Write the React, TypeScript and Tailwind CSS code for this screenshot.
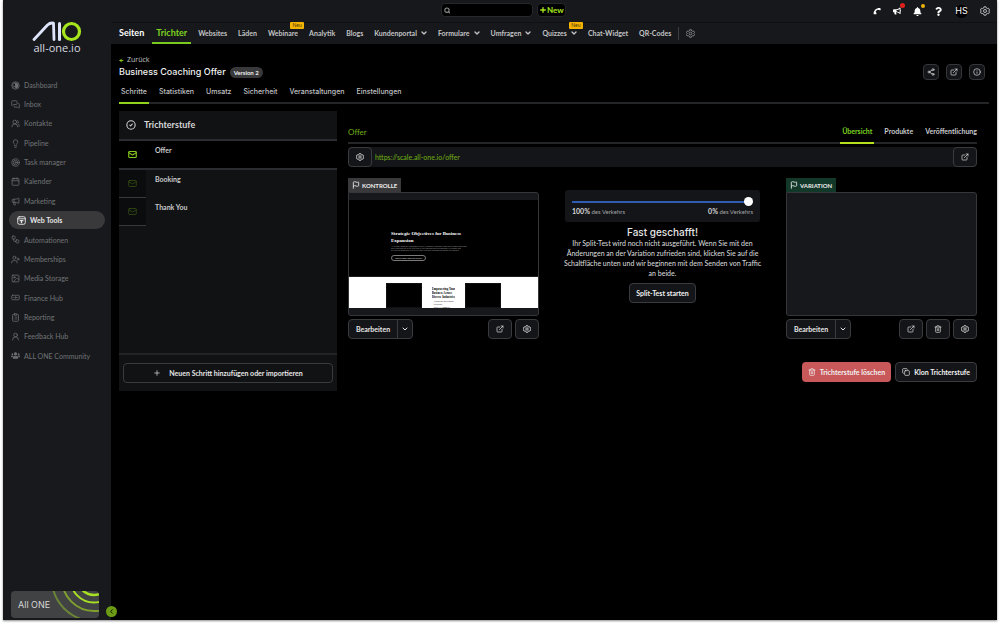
import React from "react";
import {
  ArrowLeft,
  Calendar,
  ChevronDown,
  ChevronLeft,
  CircleCheck,
  ClipboardList,
  Copy,
  ExternalLink,
  Flag,
  Image,
  Info,
  Lightbulb,
  Mail,
  Megaphone,
  MessagesSquare,
  Banknote,
  Plus,
  Search,
  Share2,
  Target,
  Trash2,
  UserPlus,
  UserRound,
  UsersRound,
  Workflow,
} from "lucide-react";
import { FaBell, FaBullhorn, FaQuestion, FaUsers } from "react-icons/fa";

type IconType = React.ComponentType<{ className?: string }>;

function DashboardIcon({ className = "" }: { className?: string }) {
  return (
    <svg viewBox="0 0 24 24" fill="none" stroke="currentColor" strokeWidth="2" className={className} aria-hidden="true">
      <circle cx="12" cy="12" r="10" />
      <path d="M12 5a7 7 0 0 1 0 14z" fill="currentColor" />
      <path d="M12 5a7 7 0 0 0-5 12l5-5z" />
    </svg>
  );
}

function WebToolsIcon({ className = "" }: { className?: string }) {
  return (
    <svg viewBox="0 0 24 24" fill="none" stroke="currentColor" strokeWidth="2.500" strokeLinecap="round" strokeLinejoin="round" className={className} aria-hidden="true">
      <rect x="2" y="2" width="20" height="20" rx="4" />
      <path d="M2 7.500h20" />
      <path d="M8 12h8M12 12v6M9.500 15.500 12 18l2.500-2.500" />
    </svg>
  );
}

const sidebarItems: { label: string; icon: IconType }[] = [
  { label: "Dashboard", icon: DashboardIcon },
  { label: "Inbox", icon: MessagesSquare },
  { label: "Kontakte", icon: UsersRound },
  { label: "Pipeline", icon: Lightbulb },
  { label: "Task manager", icon: Target },
  { label: "Kalender", icon: Calendar },
  { label: "Marketing", icon: Megaphone },
  { label: "Web Tools", icon: WebToolsIcon },
  { label: "Automationen", icon: Workflow },
  { label: "Memberships", icon: UserPlus },
  { label: "Media Storage", icon: Image },
  { label: "Finance Hub", icon: Banknote },
  { label: "Reporting", icon: ClipboardList },
  { label: "Feedback Hub", icon: UserRound },
  { label: "ALL ONE Community", icon: FaUsers },
];

const navItems: { label: string; menu?: boolean; isNew?: boolean }[] = [
  { label: "Websites" },
  { label: "Läden" },
  { label: "Webinare", isNew: true },
  { label: "Analytik" },
  { label: "Blogs" },
  { label: "Kundenportal", menu: true },
  { label: "Formulare", menu: true },
  { label: "Umfragen", menu: true },
  { label: "Quizzes", menu: true, isNew: true },
  { label: "Chat-Widget" },
  { label: "QR-Codes" },
];

const funnelTabs = ["Schritte", "Statistiken", "Umsatz", "Sicherheit", "Veranstaltungen", "Einstellungen"];
const otherSteps = ["Booking", "Thank You"];

function HexGear({ className = "" }: { className?: string }) {
  return (
    <svg viewBox="0 0 24 24" fill="none" stroke="currentColor" strokeWidth="2.400" strokeLinejoin="round" className={className} aria-hidden="true">
      <path d="M9.5 2h5l.8 3 2.2 1.2 3-.8L23 9.600l-2.200 2.400L23 14.400l-2.500 4.200-3-.8-2.200 1.200-.8 3h-5l-.8-3-2.200-1.200-3 .8L1 14.400 3.200 12 1 9.600l2.500-4.200 3 .8L8.700 5z" />
      <circle cx="12" cy="12" r="3.600" />
    </svg>
  );
}

function Handset({ className = "" }: { className?: string }) {
  return (
    <svg viewBox="0 0 24 24" fill="currentColor" className={className} aria-hidden="true">
      <path d="M2 21C1 11 9 3 20 3c2 0 3 1 3 3v2c0 1-1 2-2 2l-4-1c-1 0-1.500-.600-1.500-1.800C11.500 8.500 8.500 11.500 7.800 15c1.200 0 1.800.6 2 1.600l.7 3.400c0 1.200-.8 2-2 2H4c-1.200 0-2-.2-2-1z" />
    </svg>
  );
}

function Logo() {
  return (
    <div className="flex flex-col items-center pt-[21px]">
      <svg viewBox="0 0 50 21" fill="none" className="h-[21px] w-[50px]" aria-hidden="true">
        <path d="M2 18.500 15.500 4Q18.500 1.300 21.500 2.200L22 18.500" stroke="#dfe5fb" strokeWidth="2.800" strokeLinecap="round" strokeLinejoin="round" />
        <path d="M27.500 2.500V18.500" stroke="#dfe5fb" strokeWidth="3" strokeLinecap="round" />
        <circle cx="39.500" cy="10.500" r="8" stroke="#a6e61e" strokeWidth="3.200" />
      </svg>
      <span className="font-['Open_Sans'] text-[11px] leading-[12px] text-[#d9dbe0]">all-one.io</span>
    </div>
  );
}

function Sidebar() {
  return (
    <aside className="relative flex w-[108px] shrink-0 flex-col bg-[#17191c]">
      <Logo />
      <nav aria-label="Hauptmenü" className="mt-[22px] flex h-[289px] flex-col justify-between">
        {sidebarItems.map(({ label, icon: Icon }) =>
          label === "Web Tools" ? (
            <a key={label} href="#web-tools" className="mx-[6px] flex h-[18px] items-center gap-1 rounded-full bg-[#39393b] pl-2 text-[7px] font-bold text-[#e6e6e6]">
              <Icon className="size-[9px]" />
              {label}
            </a>
          ) : (
            <a key={label} href="#menu" className="mx-2 flex h-[18px] items-center gap-1 text-[7px] font-medium whitespace-nowrap text-[#6d6f72]">
              <Icon className="size-[9px]" />
              {label}
            </a>
          )
        )}
      </nav>
      <div className="relative mx-2 mt-auto mb-[2px] flex h-[27px] w-[88px] items-center overflow-hidden rounded-[4px] bg-[#414244]">
        <svg viewBox="0 0 48 27" fill="none" className="absolute top-0 right-0 h-[27px] w-[48px]" aria-hidden="true">
          <g stroke="#a8e022" strokeWidth="2">
            <circle cx="43" cy="-12" r="16" strokeWidth="2.400" />
            <circle cx="43" cy="-12" r="23.500" />
            <circle cx="43" cy="-12" r="32" opacity=".6" />
            <circle cx="43" cy="-12" r="42" opacity=".42" />
          </g>
        </svg>
        <span className="relative pl-[7px] font-['Inter'] text-[9px] text-[#d5d5d5]">All ONE</span>
      </div>
      <button aria-label="Menü einklappen" className="absolute -right-[6px] bottom-[3px] z-10 flex size-[11px] items-center justify-center rounded-full bg-[#6c9c14] text-black">
        <ChevronLeft className="size-[7px]" strokeWidth={3} />
      </button>
    </aside>
  );
}

function TopBar() {
  return (
    <div className="relative flex h-[23px] items-center justify-end border-b border-[#0f1012] px-[7px]">
      <div className="absolute top-[3px] left-[330px] flex gap-1">
        <label className="flex h-[14px] w-[92px] items-center rounded-[4px] border border-[#25272a] bg-black px-[2px] text-[#8b8c8f]">
          <Search className="size-[7px]" strokeWidth={4} />
          <input aria-label="Suche" className="w-full min-w-0 bg-transparent text-[7px] text-white outline-none" />
        </label>
        <button className="flex h-[14px] items-center rounded-[4px] border border-[#25272a] bg-black px-px text-[8px] font-bold text-[#a6e61e]">
          <Plus className="size-2" strokeWidth={4} />
          New
        </button>
      </div>
      <div className="flex items-center gap-3 text-white">
        <button aria-label="Telefon"><Handset className="size-2" /></button>
        <button aria-label="Neuigkeiten" className="relative">
          <FaBullhorn className="size-2" />
          <span className="absolute -top-[4px] -right-[4px] size-[5px] rounded-full bg-[#e0201b]" />
        </button>
        <button aria-label="Mitteilungen" className="relative">
          <FaBell className="size-[9px]" />
          <span className="absolute -top-[3px] -right-[3px] size-1 rounded-full bg-[#eab308]" />
        </button>
        <button aria-label="Hilfe"><FaQuestion className="size-[9px]" /></button>
        <button className="flex size-[13px] items-center justify-center rounded-full bg-black font-['Inter'] text-[9px]">HS</button>
        <button aria-label="Einstellungen" className="text-[#b5b6b8]"><HexGear className="size-[10px]" /></button>
      </div>
    </div>
  );
}

function MainNav() {
  return (
    <nav aria-label="Seiten" className="flex h-[21px] items-stretch gap-[11px] pl-2 text-[7px] font-bold whitespace-nowrap text-[#c2c3c5]">
      <a href="#seiten" className="flex items-center pb-[2px] text-[9px] text-white">Seiten</a>
      <a href="#trichter" className="-mr-1 -ml-[3px] flex items-center border-b-2 border-[#7ac91d] px-1 text-[9px] text-[#7ed321]">Trichter</a>
      {navItems.map((item) => (
        <a key={item.label} href="#nav" className="relative flex items-center gap-[3px] pb-px">
          {item.label}
          {item.menu && <ChevronDown className="-mr-px size-2" strokeWidth={4} />}
          {item.isNew && (
            <span className="absolute -top-[1px] -right-[6px] flex h-[7px] w-[14px] items-center justify-center rounded-[1px] bg-[#f5b301] text-[5px] font-normal text-[#4a3600]">Neu</span>
          )}
        </a>
      ))}
      <div className="-mx-1 my-1 w-px bg-[#3c3d40]" />
      <button aria-label="Navigation anpassen" className="text-[#8b8c8f]"><HexGear className="size-[9px]" /></button>
    </nav>
  );
}

function IconButton({ label, size, children }: { label: string; size: "sm" | "md"; children: React.ReactNode }) {
  return (
    <button
      aria-label={label}
      className={
        size === "sm"
          ? "flex size-4 items-center justify-center rounded-[4px] border border-[#35363a] bg-[#141518] text-[#e6e6e6]"
          : "flex h-5 w-6 shrink-0 items-center justify-center rounded-[4px] border border-[#3a3b3f] bg-[#141518] text-[#e6e6e6]"
      }
    >
      {children}
    </button>
  );
}

function EditButton() {
  return (
    <div className="flex h-5 overflow-hidden rounded-[4px] border border-[#3a3b3f] bg-[#141518] text-[7px] font-bold text-[#e6e6e6]">
      <button className="w-12">Bearbeiten</button>
      <button aria-label="Weitere Aktionen" className="flex w-[15px] items-center justify-center border-l border-[#3a3b3f]">
        <ChevronDown className="size-2" strokeWidth={3} />
      </button>
    </div>
  );
}

function PageHeader() {
  return (
    <header>
      <div className="flex items-center justify-between">
        <div>
          <a href="#back" className="flex h-3 items-center gap-[3px] font-['Open_Sans'] text-[7px] font-medium text-[#c2c3c5]">
            <ArrowLeft className="size-[5px] text-[#a6e61e]" strokeWidth={4} />
            Zurück
          </a>
          <div className="flex h-[14px] items-center gap-1 pb-[2px]">
            <h1 className="font-['Inter'] text-[9px] font-medium text-[#f1f1f1]">Business Coaching Offer</h1>
            <span className="flex h-[11px] items-center rounded-full bg-[#39393b] px-1 text-[6px] font-bold text-[#ededed]">Version 2</span>
          </div>
        </div>
        <div className="mt-[10px] mr-[4px] flex gap-[7px]">
          <IconButton label="Teilen" size="sm"><Share2 className="size-2" /></IconButton>
          <IconButton label="Öffnen" size="sm"><ExternalLink className="size-2" /></IconButton>
          <IconButton label="Information" size="sm"><Info className="size-2" /></IconButton>
        </div>
      </div>
      <nav aria-label="Trichter" className="mt-[2px] flex gap-2 border-b-2 border-[#242527] font-['Inter'] text-[7px] font-medium text-[#c2c3c5]">
        {funnelTabs.map((tab, i) => (
          <a
            key={tab}
            href="#tab"
            className={i === 0 ? "-mb-[2px] flex h-[22px] items-center border-b-2 border-[#8fd31d] px-[2px]" : "flex h-5 items-center px-[2px]"}
          >
            {tab}
          </a>
        ))}
      </nav>
    </header>
  );
}

function StepsPanel() {
  return (
    <section className="flex h-[280px] w-[218px] shrink-0 flex-col bg-[#111214]">
      <h2 className="flex h-[30px] items-center gap-2 border-b-2 border-[#2b2c2f] px-[7px] text-[9px] font-bold text-[#d6d7d9]">
        <CircleCheck className="size-[10px]" strokeWidth={2.5} />
        Trichterstufe
      </h2>
      <a href="#offer" className="flex h-[29px] border-b-2 border-[#2b2c2f] bg-black text-[7px] font-bold text-[#c9cacc]">
        <span className="flex w-[27px] items-center justify-center text-[#86c81d]"><Mail className="size-[9px]" strokeWidth={3} /></span>
        <span className="pt-1 pl-[9px]">Offer</span>
      </a>
      {otherSteps.map((step) => (
        <a key={step} href="#step" className="flex h-[28px] text-[7px] font-bold text-[#c9cacc]">
          <span className="flex w-[27px] items-center justify-center border-b border-[#38393c] bg-[#0b0c0e] text-[#3a5411]"><Mail className="size-[9px]" /></span>
          <span className="pt-1 pl-[9px]">{step}</span>
        </a>
      ))}
      <div className="mt-auto border-t-2 border-[#232427] px-1 pt-2 pb-2">
        <button className="flex h-5 w-full items-center justify-center gap-2 rounded-[4px] border border-[#3a3b3f] text-[7px] font-bold text-[#e6e6e6]">
          <Plus className="size-2" />
          Neuen Schritt hinzufügen oder importieren
        </button>
      </div>
    </section>
  );
}

function PagePreview() {
  return (
    <div className="h-[124px] overflow-hidden rounded-[3px] rounded-tl-none border border-[#35363a] bg-[#17181b] py-[7px]">
      <div className="h-[77px] border-b border-[#1c1d1f] bg-black pt-[30px] pl-[42px] font-['Liberation_Serif'] text-white">
        <h3 className="text-[5px] leading-[7px] font-bold">
          Strategic Objectives for Business<br />Expansion
        </h3>
        <p className="mt-px text-[2px] leading-[2px] text-[#b5b5b5]">
          At Century Business Coaching & Creative, Business Coaching is provided to small businesses
          <br />and clients who are at the forefront of their business and need guidance to continue and
          <br />develop the business to a new level and learn how coaching can support their growth.
        </p>
        <span className="mt-[4px] flex h-[6px] w-[35px] items-center justify-center rounded-full border border-[#7a7a7a] text-[2px]">Discover more about our services</span>
      </div>
      <div className="flex h-[31px] items-end justify-between bg-white px-[37px]">
        <div className="h-[25px] w-[36px] border border-[#111] bg-black" />
        <div className="h-[21px] overflow-hidden font-['Liberation_Serif'] text-[3px] leading-[4px] font-bold text-black">
          Empowering Your<br />Business Across<br />Diverse Industries
          <p className="mt-px ml-[2px] text-[2px] leading-[3px] font-normal">Technology and Startups<br />Healthcare<br />Retail, E-Commerce</p>
        </div>
        <div className="h-[25px] w-[36px] border border-[#111] bg-black" />
      </div>
    </div>
  );
}

function SplitTest() {
  return (
    <div className="w-[195px] pt-3 text-center">
      <div className="rounded-[3px] bg-[#141518] px-[7px] pt-[7px] pb-[5px]">
        <input
          type="range"
          aria-label="Verkehrsverteilung"
          min={0}
          max={100}
          defaultValue={100}
          className="block h-[9px] w-full appearance-none bg-transparent [&::-webkit-slider-runnable-track]:h-[2px] [&::-webkit-slider-runnable-track]:bg-[#2f5cae] [&::-webkit-slider-thumb]:-mt-[4px] [&::-webkit-slider-thumb]:size-[9px] [&::-webkit-slider-thumb]:appearance-none [&::-webkit-slider-thumb]:rounded-full [&::-webkit-slider-thumb]:bg-white"
        />
        <div className="flex justify-between text-[6px] leading-[11px] text-[#a5a6a9]">
          <span><b className="text-[7px] font-bold text-[#d6d7d9]">100%</b> des Verkehrs</span>
          <span><b className="text-[7px] font-bold text-[#d6d7d9]">0%</b> des Verkehrs</span>
        </div>
      </div>
      <h3 className="mt-[5px] font-['Inter'] text-[10px] leading-[10px] font-medium text-[#e6e6e6]">Fast geschafft!</h3>
      <p className="-mx-1 mt-px text-[7px] leading-[10px] font-medium text-[#d3d4d6]">
        Ihr Split-Test wird noch nicht ausgeführt. Wenn Sie mit den Änderungen an der Variation zufrieden sind, klicken Sie auf die Schaltfläche unten und wir beginnen mit dem Senden von Traffic an beide.
      </p>
      <button className="mt-[3px] h-5 rounded-[4px] border border-[#3a3b3f] bg-[#141518] px-[6px] text-[7px] font-bold text-[#f1f1f1]">Split-Test starten</button>
    </div>
  );
}

function StepDetail() {
  return (
    <section className="min-w-0 flex-1 pt-[10px] pr-3">
      <div className="flex h-[23px] items-stretch border-b-2 border-[#242527] text-[7px] font-bold">
        <h2 className="mr-auto flex items-center text-[8px] font-medium text-[#6aa516]">Offer</h2>
        <div className="flex gap-2 text-[#c9cacc]">
          <a href="#uebersicht" className="-mb-[2px] flex items-center border-b-2 border-[#b4e01d] px-[2px] text-[#7ed321]">Übersicht</a>
          <a href="#produkte" className="flex items-center px-[2px]">Produkte</a>
          <a href="#veroeffentlichung" className="flex items-center pl-[2px]">Veröffentlichung</a>
        </div>
      </div>
      <div className="mt-[3px] flex items-center rounded-[4px] bg-[#141518]">
        <IconButton label="URL-Einstellungen" size="md"><HexGear className="size-2" /></IconButton>
        <a href="#url" className="mr-auto pl-[3px] text-[7px] font-medium text-[#6aa516]">https://scale.all-one.io/offer</a>
        <IconButton label="URL öffnen" size="md"><ExternalLink className="size-2" /></IconButton>
      </div>
      <div className="mt-[11px] flex justify-between">
        <div className="w-[191px]">
          <span className="flex h-[14px] w-[53px] items-center gap-[2px] bg-[#39393b] pl-1 text-[6px] font-bold text-[#ededed]">
            <Flag className="size-2 shrink-0" strokeWidth={2.5} /> KONTROLLE
          </span>
          <PagePreview />
          <div className="mt-[3px] flex justify-between">
            <EditButton />
            <div className="flex gap-[3px]">
              <IconButton label="Vorschau" size="md"><ExternalLink className="size-2" /></IconButton>
              <IconButton label="Einstellungen" size="md"><HexGear className="size-2" /></IconButton>
            </div>
          </div>
        </div>
        <SplitTest />
        <div className="w-[191px]">
          <span className="flex h-[14px] w-[50px] items-center gap-[2px] bg-[#12382a] pl-1 text-[6px] font-bold text-[#ededed]">
            <Flag className="size-2 shrink-0" strokeWidth={2.5} /> VARIATION
          </span>
          <div className="h-[124px] rounded-[3px] rounded-tl-none border border-[#35363a] bg-[#17181b]" />
          <div className="mt-[3px] flex justify-between">
            <EditButton />
            <div className="flex gap-[3px]">
              <IconButton label="Vorschau der Variation" size="md"><ExternalLink className="size-2" /></IconButton>
              <IconButton label="Variation löschen" size="md"><Trash2 className="size-2" /></IconButton>
              <IconButton label="Einstellungen der Variation" size="md"><HexGear className="size-2" /></IconButton>
            </div>
          </div>
        </div>
      </div>
      <div className="mt-[23px] flex justify-end gap-1 text-[7px] font-bold text-[#f1f1f1]">
        <button className="flex h-5 items-center gap-1 rounded-[4px] bg-[#c9585a] px-[6px]">
          <Trash2 className="size-2" /> Trichterstufe löschen
        </button>
        <button className="flex h-5 items-center gap-1 rounded-[4px] border border-[#3a3b3f] bg-[#141518] px-[6px]">
          <Copy className="size-2" /> Klon Trichterstufe
        </button>
      </div>
    </section>
  );
}

export default function App() {
  return (
    <div className="flex min-h-screen bg-white pr-[3px] pb-[7px] pl-[3px] font-['Lato','Noto_Sans',sans-serif]">
      <div className="flex w-full bg-black shadow-[0_1px_2px_rgba(0,0,0,0.45)]">
        <Sidebar />
        <div className="flex min-w-0 flex-1 flex-col">
          <div className="bg-[#17181b]">
            <TopBar />
            <MainNav />
          </div>
          <main className="pt-[10px] pr-2 pl-2">
            <PageHeader />
            <div className="mt-[7px] flex gap-[11px]">
              <StepsPanel />
              <StepDetail />
            </div>
          </main>
        </div>
      </div>
    </div>
  );
}
